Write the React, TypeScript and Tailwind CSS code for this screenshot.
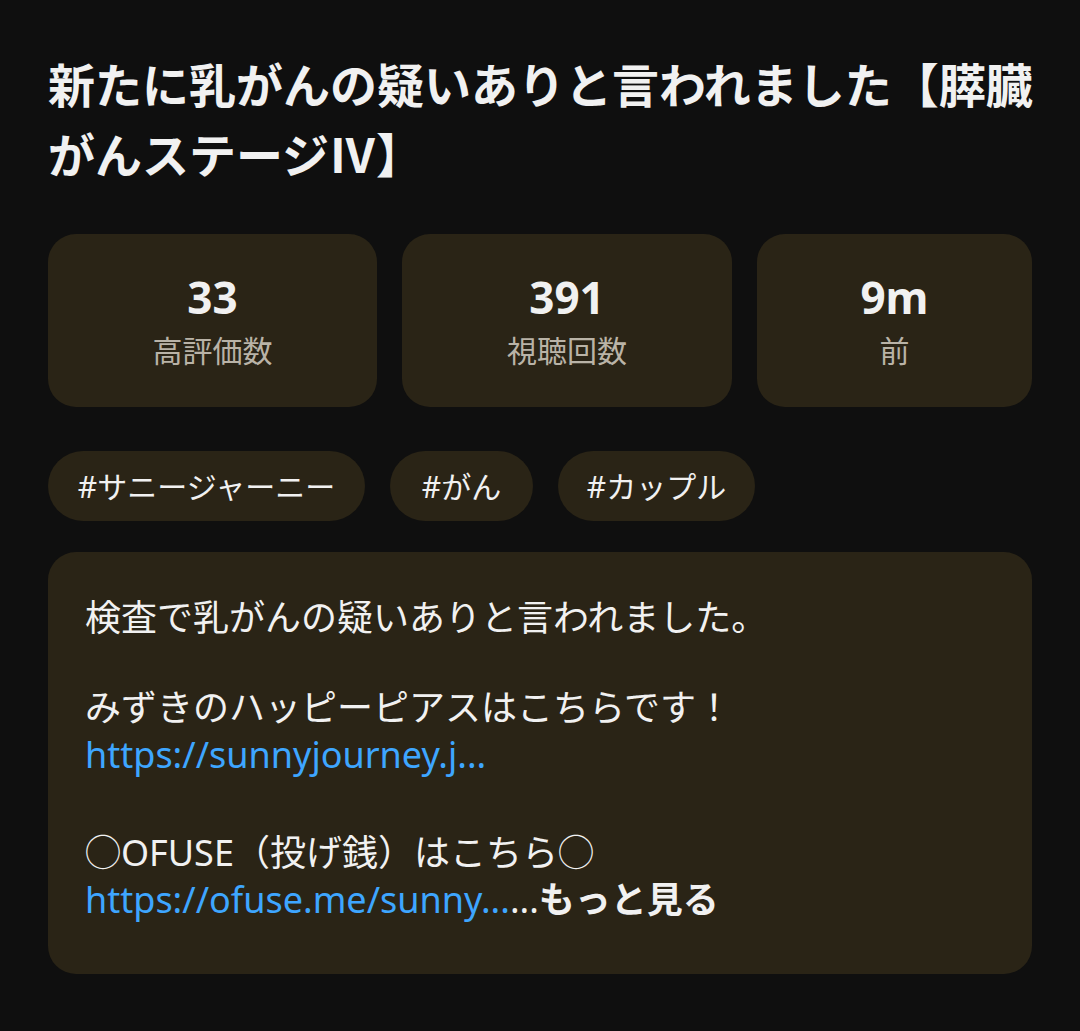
const font = { fontFamily: '"Noto Sans", "Noto Sans CJK JP", sans-serif' };

const stats = [
  { value: '33', label: '高評価数', width: 'w-[329px]' },
  { value: '391', label: '視聴回数', width: 'w-[330px]' },
  { value: '9m', label: '前', width: 'flex-1' },
];

const tags = [
  { text: '#サニージャーニー', width: 'w-[317px]' },
  { text: '#がん', width: 'w-[143px]' },
  { text: '#カップル', width: 'w-[197px]' },
];

export default function App() {
  return (
    <div className="min-h-[1031px] bg-[#0f0f0f] px-[48px] pt-[50px] text-[#f1f1f1]" style={font}>
      <h1 className="mr-[-8px] text-[47px] font-bold leading-[70px]">
        新たに乳がんの疑いありと言われました【膵臓がんステージⅣ】
      </h1>

      <div className="mt-[44px] flex gap-[25px]">
        {stats.map((s) => (
          <div
            key={s.label}
            className={`${s.width} flex h-[173px] flex-col items-center justify-center rounded-[28px] bg-[#2a2416]`}
          >
            <div className="text-[44px] font-bold leading-[60px]">{s.value}</div>
            <div className="text-[30px] leading-[48px] text-[#b9b3a7]">{s.label}</div>
          </div>
        ))}
      </div>

      <div className="mt-[44px] flex gap-[25px]">
        {tags.map((t) => (
          <div
            key={t.text}
            className={`${t.width} flex h-[70px] items-center justify-center rounded-full bg-[#2a2416] text-[30px] text-[#f1f1f1]`}
          >
            {t.text}
          </div>
        ))}
      </div>

      <div className="mt-[31px] rounded-[28px] bg-[#2a2416] pb-[51px] pl-[37px] pr-[37px] pt-[42px] text-[36px] leading-[47px]">
        <div>検査で乳がんの疑いありと言われました。</div>
        <div className="h-[43px]" />
        <div>みずきのハッピーピアスはこちらです！</div>
        <div className="text-[#3ea6ff]">https://sunnyjourney.j...</div>
        <div className="h-[51px]" />
        <div>◯OFUSE（投げ銭）はこちら◯</div>
        <div>
          <span className="text-[#3ea6ff]">https://ofuse.me/sunny...</span>
          <span>...</span>
          <span className="font-bold">もっと見る</span>
        </div>
      </div>
    </div>
  );
}
